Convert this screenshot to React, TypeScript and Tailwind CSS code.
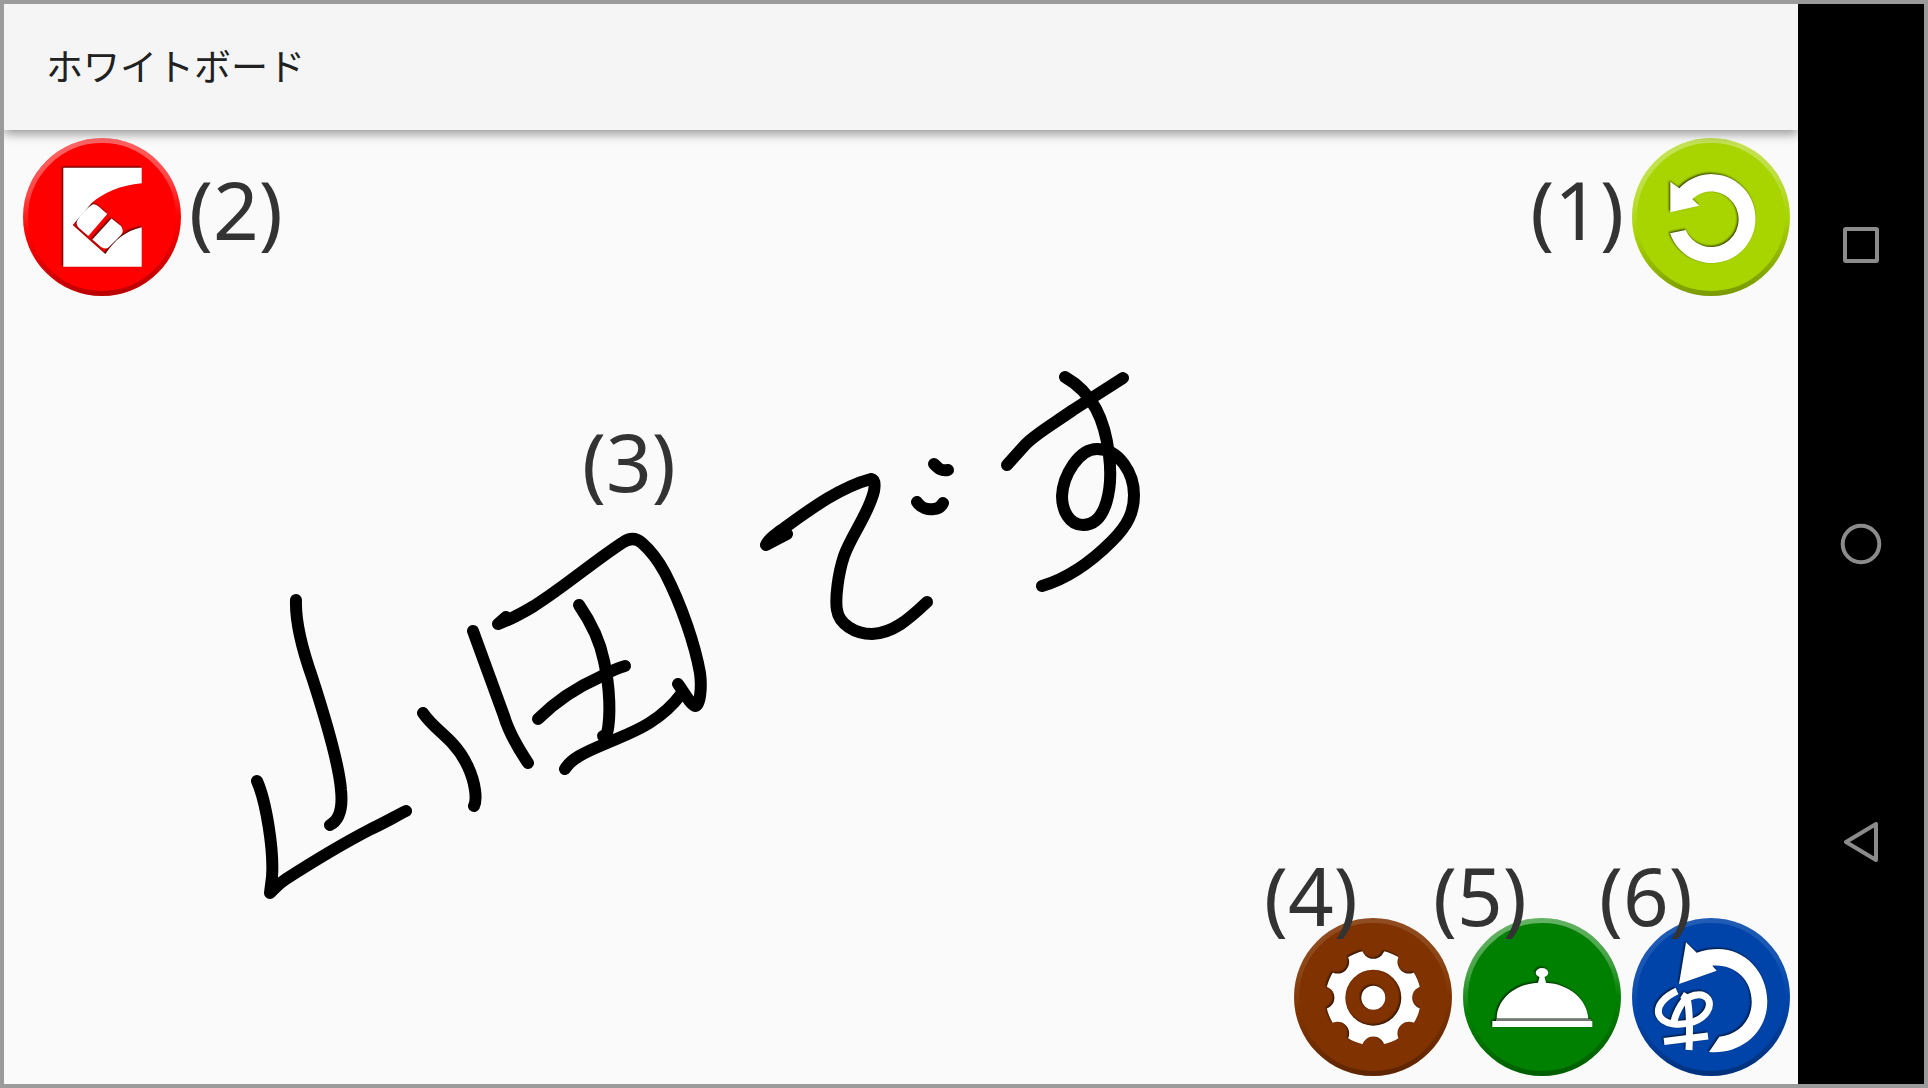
import type { ReactNode } from "react";

const strokes = [
  // 山
  "M296 600 C295 628 306 660 312 677 C324 714 339 764 341 790 C343 810 338 821 330 825",
  "M257 781 C266 801 274 850 272 877 L270 893 C275 888 278 884 286 879 C314 861 344 843 371 829 C384 823 396 816 406 811",
  "M423 713 C431 725 443 733 453 744 C465 757 473 775 475 790 C476 797 476 802 474 806",
  // 田
  "M473 631 L504 716 C509 733 518 748 528 763",
  "M506 617 L498 624 C512 619 524 612 534 606 C564 587 593 562 622 543 Q633 535 642 543 C650 550 658 560 665 573 C682 606 695 645 700 673 C702 688 700 706 695 706 C690 704 684 692 678 684",
  "M579 605 C590 621 600 641 604 661 C610 688 611 716 607 734 L603 736",
  "M538 719 C561 696 582 685 600 677 C609 672 617 668 625 666",
  "M565 769 C571 759 583 753 607 743 C630 733 659 724 682 693",
  // で
  "M787 534 L766 545 C768 539 775 535 780 531 C804 514 837 488 871 479 Q876 480 874 491 C869 513 851 536 844 556 C838 574 835 599 837 610 C839 624 855 634 872 634 C893 633 908 620 927 602",
  "M934 464 C939 469 941 471 948 470",
  "M917 502 C921 508 928 510 934 509 C938 509 941 507 943 503",
  // す
  "M1007 465 L1025 445 C1034 435 1050 426 1073 410 L1123 378",
  "M1065 377 C1093 393 1105 420 1109 455 C1113 487 1107 525 1083 525 C1069 525 1062 510 1062 496 C1063 475 1079 449 1097 449 C1119 449 1134 473 1134 495 C1134 512 1128 525 1112 541 C1089 564 1066 579 1042 586",
];

const notches = [0, 45, 90, 135, 180, 225, 270, 315];

function Caption({ children, className = "" }: { children: ReactNode; className?: string }) {
  return (
    <span
      className={`whitespace-nowrap font-['Noto_Sans',sans-serif] text-[80px] leading-[80px] text-[#333333] ${className}`}
    >
      {children}
    </span>
  );
}

type RoundButtonProps = {
  id: string;
  label: string;
  color: string;
  shine: number;
  children: ReactNode;
};

function RoundButton({ id, label, color, shine, children }: RoundButtonProps) {
  return (
    <button type="button" aria-label={label} className="block size-[158px] shrink-0 rounded-full">
      <svg viewBox="0 0 158 158" className="size-full">
        <defs>
          <linearGradient id={`${id}-bevel`} gradientUnits="userSpaceOnUse" x1="70" y1="0" x2="88" y2="158">
            <stop offset="0" stopColor="#fff" stopOpacity={shine} />
            <stop offset="0.3" stopColor="#fff" stopOpacity={shine * 0.7} />
            <stop offset="0.55" stopColor="#fff" stopOpacity="0" />
            <stop offset="0.56" stopColor="#000" stopOpacity="0" />
            <stop offset="1" stopColor="#000" stopOpacity="0.28" />
          </linearGradient>
        </defs>
        <circle cx="79" cy="79" r="79" fill={color} />
        <circle cx="79" cy="79" r="76.5" fill="none" stroke={`url(#${id}-bevel)`} strokeWidth="5" />
        <g fill="#fff" className="drop-shadow-[-1px_-1px_1px_rgba(0,0,0,0.75)]">
          {children}
        </g>
      </svg>
    </button>
  );
}

function NavBar() {
  return (
    <nav className="flex w-[126px] shrink-0 flex-col bg-black py-[92px]">
      <button type="button" aria-label="Recents" className="flex flex-1 items-center justify-center">
        <svg viewBox="0 0 42 42" className="size-[42px]" fill="none" stroke="#8b8b8b" strokeWidth="4">
          <rect x="5" y="5" width="32" height="32" rx="1" strokeLinejoin="round" />
        </svg>
      </button>
      <button type="button" aria-label="Home" className="flex flex-1 items-center justify-center">
        <svg viewBox="0 0 42 42" className="size-[42px]" fill="none" stroke="#8b8b8b" strokeWidth="4">
          <circle cx="21" cy="21" r="18.3" />
        </svg>
      </button>
      <button type="button" aria-label="Back" className="flex flex-1 items-center justify-center">
        <svg viewBox="0 0 42 42" className="size-[42px]" fill="none" stroke="#8b8b8b" strokeWidth="4">
          <path d="M36 2 V38 L6 20 Z" strokeLinejoin="round" />
        </svg>
      </button>
    </nav>
  );
}

export default function App() {
  return (
    <div className="flex min-h-screen border-4 border-[#9b9b9b] bg-[#fafafa]">
      <div className="flex min-w-0 flex-1 flex-col">
        <header className="relative z-10 flex h-[126px] shrink-0 items-center bg-[#f5f5f5] px-[42px] pb-1 shadow-[0_4px_10px_rgba(0,0,0,0.4)] [clip-path:inset(0_0_-20px_0)]">
          <h1 className="font-['Noto_Sans_CJK_JP',sans-serif] text-[37px] leading-[48px] text-[#212121]">
            ホワイトボード
          </h1>
        </header>

        <main className="relative flex flex-1 flex-col justify-between overflow-hidden py-2 pr-2 pl-[19px]">
          {/* handwriting */}
          <svg
            viewBox="4 130 1794 954"
            preserveAspectRatio="xMinYMin meet"
            className="absolute inset-0 size-full"
            fill="none"
            stroke="#000"
            strokeWidth="12"
            strokeLinecap="round"
            strokeLinejoin="round"
          >
            {strokes.map((d) => (
              <path key={d} d={d} />
            ))}
          </svg>
          <Caption className="absolute top-[291px] left-[578px]">(3)</Caption>

          <div className="relative flex items-center justify-between">
            <div className="flex items-center gap-2">
              <RoundButton id="clear" label="Clear" color="#ff0000" shine={0.4}>
                <path d="M40.3 29.7 H118.7 V45.3 C98 47 80 55 68.7 65 L49.7 87 L82.3 116 C92 102 102 93 118.7 89.3 V128.7 H40.3 Z" />
                <path d="M84.3 76 L65.3 98 L56 90 Q52 86 54.5 82 Q60 73 68 67.5 Q71 65 75 68 Z" />
                <path d="M88.5 80.5 L69.3 101.5 L78 109 Q83 112 86 109 L98 97 Q101.5 93 98 88 Z" />
              </RoundButton>
              <Caption className="pb-4">(2)</Caption>
            </div>
            <div className="flex items-center gap-2">
              <Caption className="pb-4">(1)</Caption>
              <RoundButton id="undo" label="Undo" color="#a8d400" shine={0.35}>
                <path d="M38.3 43.7 L47.3 50.3 A44 44.5 0 1 1 38 95.3 L53.7 92 A27.5 27.8 0 1 0 60.3 61 L67.3 67.7 L38.3 74.3 Z" />
              </RoundButton>
            </div>
          </div>

          <div className="relative flex justify-end gap-[11px]">
            <div className="relative">
              <RoundButton id="settings" label="Settings" color="#803300" shine={0.13}>
                <mask id="gear-mask">
                  <rect width="158" height="158" fill="#fff" />
                  {notches.map((a) => (
                    <circle key={a} cx="79.3" cy="29.3" r="11.5" fill="#000" transform={`rotate(${a} 79.3 79.7)`} />
                  ))}
                  <circle cx="79.3" cy="79.7" r="28" fill="#000" />
                </mask>
                <circle cx="79.3" cy="79.7" r="47.7" mask="url(#gear-mask)" />
                <circle cx="79.3" cy="79.7" r="12" />
              </RoundButton>
              <Caption className="pointer-events-none absolute -top-[63px] -left-[30px]">(4)</Caption>
            </div>
            <div className="relative">
              <RoundButton id="bell" label="Call" color="#008000" shine={0.4}>
                <ellipse cx="79" cy="54.7" rx="6.3" ry="4.7" />
                <path d="M77 57 H81 L83 64.7 C106 66 124 81 125.3 100.5 H33.7 C34 81 52 66 75 64.7 Z" />
                <path d="M33 101 H128 V104 H33 Z" fill="#777" />
                <rect x="29.3" y="103" width="100" height="6" />
              </RoundButton>
              <Caption className="pointer-events-none absolute -top-[63px] -left-[30px]">(5)</Caption>
            </div>
            <div className="relative">
              <RoundButton id="revert" label="Revert stroke" color="#0044aa" shine={0.13}>
                <path d="M54 24.3 L64.7 34.7 C72 32 80 31 86 31 C113 31 135.3 54 135.3 83.7 C135.3 115 108 137 77 134 L87.3 118.7 C106 117 119.7 103 119.7 83.7 C119.7 62 103 46 80.3 47.7 L84.7 52.7 L47 66 Z" />
                <g fill="none" stroke="#fff" strokeWidth="7">
                  <path d="M45 73 C32 79 24 88 27 97 C31 107 48 108 61 104 C75 99 80 88 76 81 C70 73 55 77 49 87 C46 92 43 97 42 104" />
                  <path d="M50 77 L55 80 C58 92 58 108 57 132" />
                  <path d="M32 123.5 L76 118" />
                </g>
              </RoundButton>
              <Caption className="pointer-events-none absolute -top-[63px] -left-[33px]">(6)</Caption>
            </div>
          </div>
        </main>
      </div>
      <NavBar />
    </div>
  );
}
